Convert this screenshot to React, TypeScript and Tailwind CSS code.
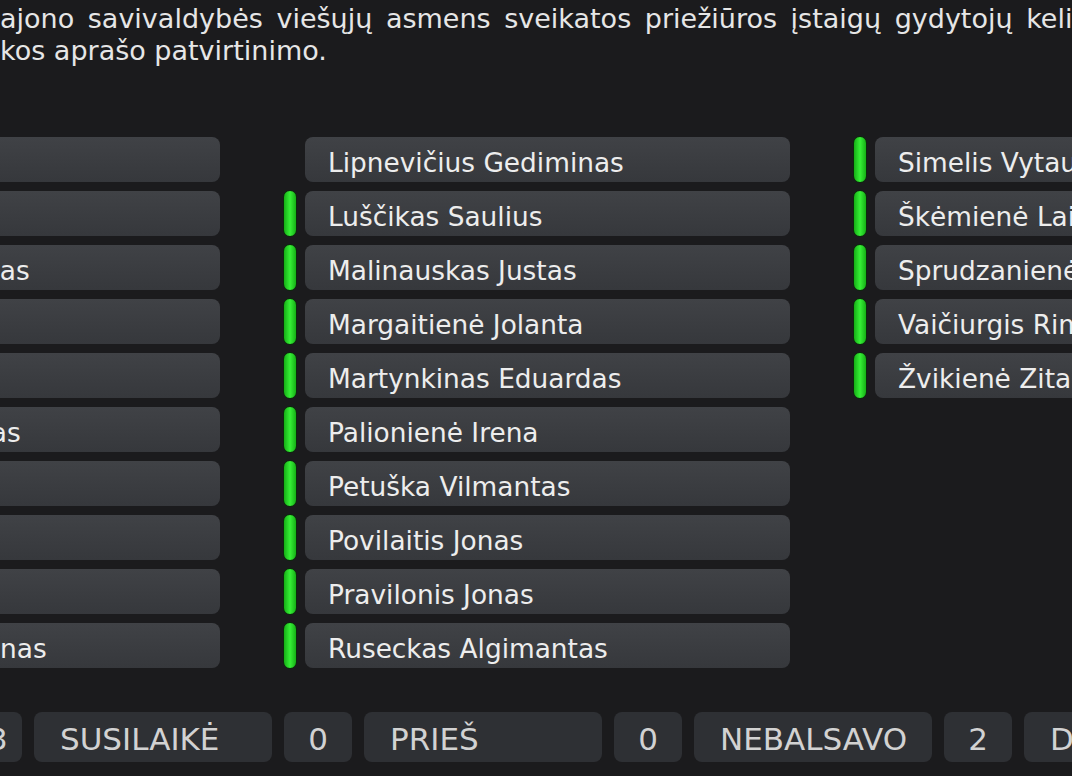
const left = [
  "Adomaitis Rytis",
  "Bagdonas Jonas",
  "Jankauskas Vytautas",
  "Daukšas Arvydas",
  "Gudelis Tomas",
  "Kavaliauskas Tomas",
  "Jonaitis Petras",
  "Kairys Jonas",
  "Kalvaitis Rokas",
  "Kriaučiūnas Laimonas",
];

const middle = [
  "Lipnevičius Gediminas",
  "Luščikas Saulius",
  "Malinauskas Justas",
  "Margaitienė Jolanta",
  "Martynkinas Eduardas",
  "Palionienė Irena",
  "Petuška Vilmantas",
  "Povilaitis Jonas",
  "Pravilonis Jonas",
  "Ruseckas Algimantas",
];

const right = [
  "Simelis Vytautas",
  "Škėmienė Laima",
  "Sprudzanienė Irena",
  "Vaičiurgis Rimantas",
  "Žvikienė Zita",
];

type Member = { name: string; voted: boolean };

const columns: Member[][] = [
  left.map((name) => ({ name, voted: true })),
  middle.map((name, i) => ({ name, voted: i > 0 })),
  right.map((name) => ({ name, voted: true })),
];

const totals = [
  { label: "UŽ", count: "23" },
  { label: "SUSILAIKĖ", count: "0" },
  { label: "PRIEŠ", count: "0" },
  { label: "NEBALSAVO", count: "2" },
  { label: "DALYVAVO", count: "25" },
];

function Pill() {
  return (
    <div className="w-[14px] h-[47px] shrink-0 rounded-full border border-[#0b2a0b] bg-linear-to-r from-[#15b015] via-[#36f036] to-[#15b015]" />
  );
}

function MemberRow({ member }: { member: Member }) {
  return (
    <div className="flex items-center gap-2 h-[45px]">
      {member.voted ? <Pill /> : <div className="w-[14px] shrink-0" />}
      <div className="w-[485px] h-[45px] shrink-0 flex items-center pt-[7px] pl-[23px] rounded-[8px] bg-linear-to-b from-[#404246] to-[#36383c] text-[26.4px] leading-none text-[#ededed] whitespace-nowrap">
        {member.name}
      </div>
    </div>
  );
}

export default function App() {
  return (
    <div className="w-[1072px] h-[776px] overflow-hidden bg-[#1b1b1d] text-[#e6e6e6] font-['DejaVu_Sans',Verdana,sans-serif]">
      {/* first line is justified in the source, so words sit wider apart */}
      <div className="pt-[3px] text-[27px] leading-[32px] whitespace-nowrap">
        <p className="[word-spacing:5px]">ajono savivaldybės viešųjų asmens sveikatos priežiūros įstaigų gydytojų kelionės</p>
        <p>kos aprašo patvirtinimo.</p>
      </div>

      <div className="mt-[70px] ml-[-287px] flex gap-[63px]">
        {columns.map((col, ci) => (
          <div key={ci} className="w-[507px] shrink-0 flex flex-col gap-[9px]">
            {col.map((m) => (
              <MemberRow key={m.name} member={m} />
            ))}
          </div>
        ))}
      </div>

      <div className="mt-[44px] ml-[-296px] flex gap-3 text-[31px] leading-none text-[#d2d2d2]">
        {totals.map((t) => (
          <div key={t.label} className="flex gap-3 shrink-0">
            <div className="w-[238px] h-[50px] flex items-center pt-[4px] pl-[26px] rounded-[8px] bg-[#2e3034]">
              {t.label}
            </div>
            <div className="w-[68px] h-[50px] flex items-center justify-center pt-[4px] rounded-[8px] bg-[#2e3034]">
              {t.count}
            </div>
          </div>
        ))}
      </div>
    </div>
  );
}
